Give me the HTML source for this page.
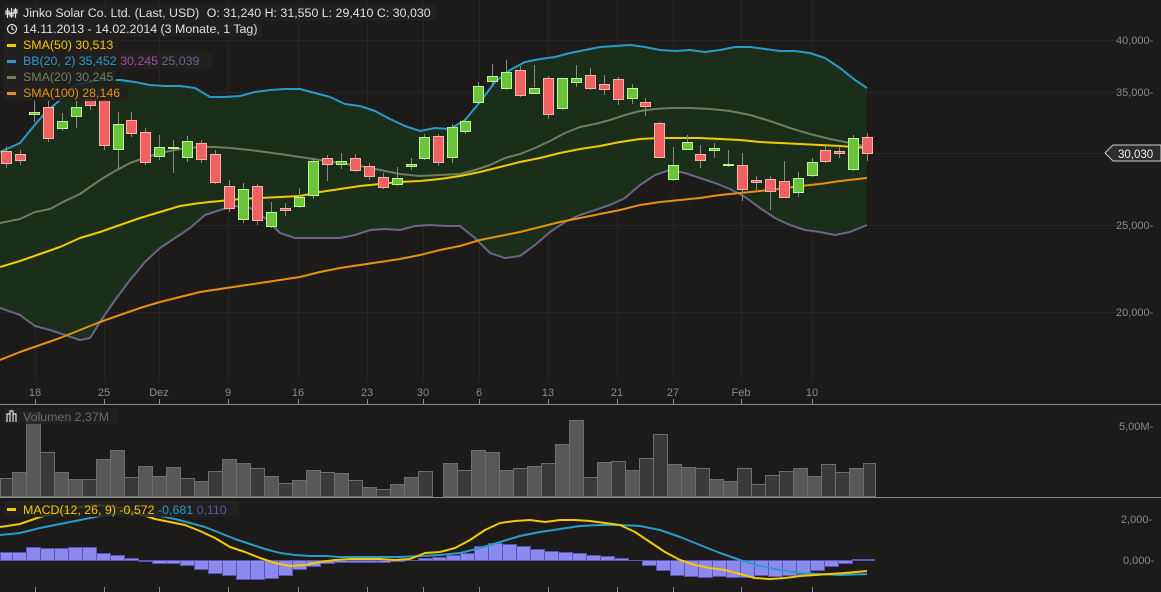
<!DOCTYPE html>
<html><head><meta charset="utf-8"><style>
html,body{margin:0;padding:0;background:#1c1b1a;width:1161px;height:592px;overflow:hidden}
svg{display:block;font-family:"Liberation Sans",sans-serif}
</style></head><body>
<svg width="1161" height="592" viewBox="0 0 1161 592">
<rect width="1161" height="592" fill="#1c1b1a"/>
<g stroke="#262624" stroke-width="1">
<line x1="0" y1="40.5" x2="1118" y2="40.5"/><line x1="0" y1="92.5" x2="1118" y2="92.5"/>
<line x1="0" y1="153.5" x2="1105" y2="153.5"/><line x1="0" y1="225.5" x2="1118" y2="225.5"/>
<line x1="0" y1="312.5" x2="1118" y2="312.5"/>
<line x1="35.5" y1="0" x2="35.5" y2="380"/><line x1="104.5" y1="0" x2="104.5" y2="380"/><line x1="159.5" y1="0" x2="159.5" y2="380"/><line x1="228.5" y1="0" x2="228.5" y2="380"/><line x1="298.5" y1="0" x2="298.5" y2="380"/><line x1="367.5" y1="0" x2="367.5" y2="380"/><line x1="423.5" y1="0" x2="423.5" y2="380"/><line x1="479.5" y1="0" x2="479.5" y2="380"/><line x1="548.5" y1="0" x2="548.5" y2="380"/><line x1="617.5" y1="0" x2="617.5" y2="380"/><line x1="673.5" y1="0" x2="673.5" y2="380"/><line x1="741.5" y1="0" x2="741.5" y2="380"/><line x1="812.5" y1="0" x2="812.5" y2="380"/>
</g>
<path fill="#1b2e1a" d="M0,152 L20,143 L33,127 L45,113 L60,100 L75,85 L90,82 L105,80 L120,80 L135,82 L150,85 L165,86 L180,86 L195,88 L210,97 L225,97 L240,96 L255,92 L270,90 L285,89 L300,89 L315,93 L330,97 L345,104 L360,106 L375,111 L390,119 L405,126 L420,131 L435,128 L450,129 L465,120 L480,102 L495,82 L510,70 L525,62 L540,59 L555,57 L570,53 L585,50 L600,47 L615,46 L630,45 L645,47 L660,50 L675,51 L690,50 L705,52 L720,50 L735,47 L750,47 L765,49 L780,51 L795,51 L810,53 L825,58 L840,68 L855,80 L867,88 L867,225 L850,232 L835,235 L820,232 L805,230 L790,225 L775,218 L760,208 L745,197 L730,189 L715,183 L700,178 L685,173 L670,170 L655,175 L640,185 L625,198 L610,205 L595,210 L580,215 L565,222 L550,232 L535,245 L520,256 L505,258 L490,253 L475,238 L460,226 L445,226 L430,225 L415,226 L400,230 L385,229 L370,230 L355,235 L340,238 L325,238 L310,238 L295,238 L280,233 L265,218 L250,208 L235,206 L220,210 L205,215 L190,228 L175,238 L160,248 L145,262 L130,280 L115,300 L100,322 L90,338 L80,340 L65,335 L50,330 L35,326 L20,315 L0,308 Z"/>
<g fill="none" stroke-width="2" stroke-linejoin="round">
<polyline stroke="#2a9ac8" points="0,152 20,143 33,127 45,113 60,100 75,85 90,82 105,80 120,80 135,82 150,85 165,86 180,86 195,88 210,97 225,97 240,96 255,92 270,90 285,89 300,89 315,93 330,97 345,104 360,106 375,111 390,119 405,126 420,131 435,128 450,129 465,120 480,102 495,82 510,70 525,62 540,59 555,57 570,53 585,50 600,47 615,46 630,45 645,47 660,50 675,51 690,50 705,52 720,50 735,47 750,47 765,49 780,51 795,51 810,53 825,58 840,68 855,80 867,88"/>
<polyline stroke="#6a6487" points="0,308 20,315 35,326 50,330 65,335 80,340 90,338 100,322 115,300 130,280 145,262 160,248 175,238 190,228 205,215 220,210 235,206 250,208 265,218 280,233 295,238 310,238 325,238 340,238 355,235 370,230 385,229 400,230 415,226 430,225 445,226 460,226 475,238 490,253 505,258 520,256 535,245 550,232 565,222 580,215 595,210 610,205 625,198 640,185 655,175 670,170 685,173 700,178 715,183 730,189 745,197 760,208 775,218 790,225 805,230 820,232 835,235 850,232 867,225"/>
<polyline stroke="#6f7f5e" points="0,223 20,219 35,212 50,209 65,201 80,194 100,180 115,171 130,163 150,156 165,152 180,149 200,147 215,147 230,148 250,150 265,152 280,154 300,157 320,160 340,163 360,166 380,170 400,174 420,176 440,175 460,174 475,170 490,165 505,158 520,154 535,148 550,141 565,133 580,127 595,124 610,120 625,115 640,111 655,109 670,108 690,108 710,109 730,111 750,115 770,121 790,128 810,134 830,139 850,143 867,147"/>
<polyline stroke="#e8900f" points="0,360 20,352 40,345 60,338 80,330 100,322 120,315 140,308 160,302 180,297 200,292 220,289 240,286 260,283 280,280 300,277 320,272 340,268 360,265 380,262 400,259 420,255 440,250 460,246 480,240 500,236 520,232 540,227 560,222 580,218 600,214 620,210 640,205 660,202 680,200 700,198 720,195 740,193 760,191 780,189 800,186 820,184 840,181 867,178"/>
<polyline stroke="#f5c800" points="0,267 20,261 40,254 60,247 80,238 100,232 120,225 140,218 160,212 180,206 200,203 220,201 240,199 260,198 280,197 300,196 320,192 340,189 360,186 380,184 400,182 420,181 440,179 460,176 480,172 500,167 520,162 540,158 560,153 580,149 600,146 620,142 640,139 660,138 680,138 700,138 720,139 740,140 760,142 780,143 800,144 820,145 840,146 867,148"/>
</g>
<g stroke="#8a8a86" stroke-width="1">
<line x1="6.5" y1="146" x2="6.5" y2="168"/><line x1="20.5" y1="150" x2="20.5" y2="165"/><line x1="34.5" y1="100" x2="34.5" y2="122"/><line x1="48.5" y1="100" x2="48.5" y2="142"/><line x1="62.5" y1="113" x2="62.5" y2="131"/><line x1="76.5" y1="100" x2="76.5" y2="128"/><line x1="90.5" y1="92" x2="90.5" y2="110"/><line x1="104.5" y1="92" x2="104.5" y2="150"/><line x1="118.5" y1="112" x2="118.5" y2="170"/><line x1="131.5" y1="112" x2="131.5" y2="137"/><line x1="145.5" y1="128" x2="145.5" y2="165"/><line x1="159.5" y1="135" x2="159.5" y2="160"/><line x1="173.5" y1="140" x2="173.5" y2="173"/><line x1="187.5" y1="136" x2="187.5" y2="162"/><line x1="201.5" y1="140" x2="201.5" y2="163"/><line x1="215.5" y1="150" x2="215.5" y2="184"/><line x1="229.5" y1="180" x2="229.5" y2="212"/><line x1="243.5" y1="183" x2="243.5" y2="223"/><line x1="257.5" y1="184" x2="257.5" y2="225"/><line x1="271.5" y1="202" x2="271.5" y2="228"/><line x1="285.5" y1="203" x2="285.5" y2="216"/><line x1="299.5" y1="188" x2="299.5" y2="208"/><line x1="313.5" y1="158" x2="313.5" y2="199"/><line x1="327.5" y1="155" x2="327.5" y2="181"/><line x1="341.5" y1="153" x2="341.5" y2="169"/><line x1="355.5" y1="154" x2="355.5" y2="172"/><line x1="369.5" y1="163" x2="369.5" y2="180"/><line x1="383.5" y1="173" x2="383.5" y2="189"/><line x1="397.5" y1="167" x2="397.5" y2="186"/><line x1="411.5" y1="158" x2="411.5" y2="170"/><line x1="424.5" y1="134" x2="424.5" y2="160"/><line x1="438.5" y1="134" x2="438.5" y2="166"/><line x1="452.5" y1="124" x2="452.5" y2="163"/><line x1="465.5" y1="118" x2="465.5" y2="134"/><line x1="478.5" y1="82" x2="478.5" y2="104"/><line x1="492.5" y1="64" x2="492.5" y2="86"/><line x1="506.5" y1="60" x2="506.5" y2="90"/><line x1="520.5" y1="66" x2="520.5" y2="97"/><line x1="534.5" y1="65" x2="534.5" y2="87"/><line x1="548.5" y1="76" x2="548.5" y2="119"/><line x1="562.5" y1="78" x2="562.5" y2="110"/><line x1="576.5" y1="65" x2="576.5" y2="87"/><line x1="590.5" y1="68" x2="590.5" y2="90"/><line x1="604.5" y1="75" x2="604.5" y2="95"/><line x1="618.5" y1="77" x2="618.5" y2="105"/><line x1="632.5" y1="84" x2="632.5" y2="104"/><line x1="645.5" y1="98" x2="645.5" y2="116"/><line x1="659.5" y1="122" x2="659.5" y2="158"/><line x1="673.5" y1="147" x2="673.5" y2="181"/><line x1="687.5" y1="135" x2="687.5" y2="150"/><line x1="700.5" y1="145" x2="700.5" y2="168"/><line x1="714.5" y1="143" x2="714.5" y2="158"/><line x1="728.5" y1="150" x2="728.5" y2="167"/><line x1="742.5" y1="153" x2="742.5" y2="201"/><line x1="756.5" y1="176" x2="756.5" y2="190"/><line x1="770.5" y1="176" x2="770.5" y2="210"/><line x1="784.5" y1="161" x2="784.5" y2="198"/><line x1="798.5" y1="172" x2="798.5" y2="197"/><line x1="812.5" y1="158" x2="812.5" y2="177"/><line x1="825.5" y1="146" x2="825.5" y2="163"/><line x1="839.5" y1="146" x2="839.5" y2="158"/><line x1="853.5" y1="135" x2="853.5" y2="171"/><line x1="867.5" y1="133" x2="867.5" y2="161"/>
</g>
<g fill="#f06262" stroke="#ffb0a8" stroke-width="1">
<rect x="1.5" y="151.5" width="10" height="12"/><rect x="15.5" y="154.5" width="10" height="6"/><rect x="43.5" y="107.5" width="10" height="31"/><rect x="85.5" y="99.5" width="10" height="6"/><rect x="99.5" y="100.5" width="10" height="45"/><rect x="126.5" y="120.5" width="10" height="13"/><rect x="140.5" y="132.5" width="10" height="30"/><rect x="196.5" y="143.5" width="10" height="16"/><rect x="210.5" y="154.5" width="10" height="28"/><rect x="224.5" y="186.5" width="10" height="22"/><rect x="252.5" y="186.5" width="10" height="34"/><rect x="280.5" y="208.5" width="10" height="2"/><rect x="322.5" y="158.5" width="10" height="6"/><rect x="350.5" y="158.5" width="10" height="12"/><rect x="364.5" y="166.5" width="10" height="10"/><rect x="378.5" y="177.5" width="10" height="10"/><rect x="433.5" y="136.5" width="10" height="26"/><rect x="515.5" y="70.5" width="10" height="25"/><rect x="543.5" y="78.5" width="10" height="36"/><rect x="585.5" y="75.5" width="10" height="13"/><rect x="599.5" y="84.5" width="10" height="5"/><rect x="613.5" y="79.5" width="10" height="20"/><rect x="640.5" y="102.5" width="10" height="4"/><rect x="654.5" y="123.5" width="10" height="34"/><rect x="695.5" y="154.5" width="10" height="6"/><rect x="737.5" y="165.5" width="10" height="24"/><rect x="751.5" y="180.5" width="10" height="2"/><rect x="765.5" y="179.5" width="10" height="12"/><rect x="779.5" y="181.5" width="10" height="16"/><rect x="820.5" y="150.5" width="10" height="11"/><rect x="834.5" y="151.5" width="10" height="2"/><rect x="862.5" y="137.5" width="10" height="16"/>
</g>
<g fill="#6cc43a" stroke="#b8f890" stroke-width="1">
<rect x="29.5" y="112.5" width="10" height="2"/><rect x="57.5" y="121.5" width="10" height="7"/><rect x="71.5" y="107.5" width="10" height="9"/><rect x="113.5" y="124.5" width="10" height="25"/><rect x="154.5" y="147.5" width="10" height="9"/><rect x="168.5" y="147.5" width="10" height="1"/><rect x="182.5" y="141.5" width="10" height="16"/><rect x="238.5" y="189.5" width="10" height="30"/><rect x="266.5" y="212.5" width="10" height="14"/><rect x="294.5" y="197.5" width="10" height="9"/><rect x="308.5" y="161.5" width="10" height="34"/><rect x="336.5" y="161.5" width="10" height="3"/><rect x="392.5" y="178.5" width="10" height="6"/><rect x="406.5" y="164.5" width="10" height="2"/><rect x="419.5" y="137.5" width="10" height="21"/><rect x="447.5" y="127.5" width="10" height="30"/><rect x="460.5" y="121.5" width="10" height="10"/><rect x="473.5" y="86.5" width="10" height="16"/><rect x="487.5" y="76.5" width="10" height="5"/><rect x="501.5" y="72.5" width="10" height="16"/><rect x="529.5" y="88.5" width="10" height="5"/><rect x="557.5" y="78.5" width="10" height="30"/><rect x="571.5" y="78.5" width="10" height="4"/><rect x="627.5" y="88.5" width="10" height="10"/><rect x="668.5" y="165.5" width="10" height="14"/><rect x="682.5" y="142.5" width="10" height="7"/><rect x="709.5" y="148.5" width="10" height="2"/><rect x="723.5" y="164.5" width="10" height="1"/><rect x="793.5" y="178.5" width="10" height="14"/><rect x="807.5" y="162.5" width="10" height="13"/><rect x="848.5" y="138.5" width="10" height="31"/>
</g>
<path d="M1105,153 L1113,145 L1161,145 L1161,161 L1113,161 Z" fill="#2c2c2c" stroke="#cfcfcf" stroke-width="1"/>
<text x="1118" y="158" fill="#f0f0f0" font-size="11.5">30,030</text>
<g fill="#8a8a8a" font-size="11">
<text x="1116" y="44">40,000-</text><text x="1116" y="96">35,000-</text><text x="1116" y="229">25,000-</text><text x="1116" y="316">20,000-</text>
<text x="1119" y="430">5,00M-</text><text x="1121" y="523">2,000-</text><text x="1123" y="564">0,000-</text>
</g>
<g fill="#8a8a8a" font-size="11" text-anchor="middle">
<text x="35" y="396">18</text><text x="104" y="396">25</text><text x="159" y="396">Dez</text><text x="228" y="396">9</text><text x="298" y="396">16</text><text x="367" y="396">23</text><text x="423" y="396">30</text><text x="479" y="396">6</text><text x="548" y="396">13</text><text x="617" y="396">21</text><text x="673" y="396">27</text><text x="741" y="396">Feb</text><text x="812" y="396">10</text>
</g>
<g stroke="#8a8a8a"><line x1="0" y1="404.5" x2="1161" y2="404.5"/><line x1="0" y1="497.5" x2="1161" y2="497.5"/></g>
<g stroke="#8a8a8a"><line x1="35.5" y1="399" x2="35.5" y2="404"/><line x1="104.5" y1="399" x2="104.5" y2="404"/><line x1="159.5" y1="399" x2="159.5" y2="404"/><line x1="228.5" y1="399" x2="228.5" y2="404"/><line x1="298.5" y1="399" x2="298.5" y2="404"/><line x1="367.5" y1="399" x2="367.5" y2="404"/><line x1="423.5" y1="399" x2="423.5" y2="404"/><line x1="479.5" y1="399" x2="479.5" y2="404"/><line x1="548.5" y1="399" x2="548.5" y2="404"/><line x1="617.5" y1="399" x2="617.5" y2="404"/><line x1="673.5" y1="399" x2="673.5" y2="404"/><line x1="741.5" y1="399" x2="741.5" y2="404"/><line x1="812.5" y1="399" x2="812.5" y2="404"/></g>
<g stroke="#6e6e6e" stroke-width="1">
<g fill="#3a3a3a">
<rect x="0.5" y="478.5" width="12" height="18"/><rect x="40.5" y="452.5" width="14" height="44"/><rect x="82.5" y="479.5" width="14" height="17"/><rect x="124.5" y="477.5" width="14" height="19"/><rect x="180.5" y="478.5" width="14" height="18"/><rect x="208.5" y="471.5" width="14" height="25"/><rect x="250.5" y="468.5" width="14" height="28"/><rect x="278.5" y="483.5" width="14" height="13"/><rect x="320.5" y="472.5" width="14" height="24"/><rect x="348.5" y="480.5" width="14" height="16"/><rect x="376.5" y="489.5" width="14" height="7"/><rect x="418.5" y="471.5" width="14" height="25"/><rect x="457.5" y="470.5" width="14" height="26"/><rect x="513.5" y="468.5" width="14" height="28"/><rect x="541.5" y="463.5" width="14" height="33"/><rect x="583.5" y="477.5" width="14" height="19"/><rect x="611.5" y="461.5" width="14" height="35"/><rect x="639.5" y="458.5" width="14" height="38"/><rect x="653.5" y="434.5" width="14" height="62"/><rect x="695.5" y="468.5" width="14" height="28"/><rect x="737.5" y="468.5" width="14" height="28"/><rect x="751.5" y="484.5" width="14" height="12"/><rect x="765.5" y="475.5" width="14" height="21"/><rect x="779.5" y="471.5" width="14" height="25"/><rect x="821.5" y="464.5" width="14" height="32"/><rect x="835.5" y="472.5" width="14" height="24"/><rect x="863.5" y="463.5" width="12" height="33"/>
</g>
<g fill="#585858">
<rect x="12.5" y="472.5" width="14" height="24"/><rect x="26.5" y="412.5" width="14" height="84"/><rect x="54.5" y="472.5" width="14" height="24"/><rect x="68.5" y="479.5" width="14" height="17"/><rect x="96.5" y="459.5" width="14" height="37"/><rect x="110.5" y="450.5" width="14" height="46"/><rect x="138.5" y="466.5" width="14" height="30"/><rect x="152.5" y="476.5" width="14" height="20"/><rect x="166.5" y="467.5" width="14" height="29"/><rect x="194.5" y="481.5" width="14" height="15"/><rect x="222.5" y="459.5" width="14" height="37"/><rect x="236.5" y="463.5" width="14" height="33"/><rect x="264.5" y="476.5" width="14" height="20"/><rect x="292.5" y="480.5" width="14" height="16"/><rect x="306.5" y="470.5" width="14" height="26"/><rect x="334.5" y="473.5" width="14" height="23"/><rect x="362.5" y="487.5" width="14" height="9"/><rect x="390.5" y="484.5" width="14" height="12"/><rect x="404.5" y="477.5" width="14" height="19"/><rect x="443.5" y="463.5" width="14" height="33"/><rect x="471.5" y="450.5" width="14" height="46"/><rect x="485.5" y="452.5" width="14" height="44"/><rect x="499.5" y="470.5" width="14" height="26"/><rect x="527.5" y="466.5" width="14" height="30"/><rect x="555.5" y="444.5" width="14" height="52"/><rect x="569.5" y="420.5" width="14" height="76"/><rect x="597.5" y="462.5" width="14" height="34"/><rect x="625.5" y="470.5" width="14" height="26"/><rect x="667.5" y="464.5" width="14" height="32"/><rect x="681.5" y="467.5" width="14" height="29"/><rect x="709.5" y="479.5" width="14" height="17"/><rect x="723.5" y="481.5" width="14" height="15"/><rect x="793.5" y="468.5" width="14" height="28"/><rect x="807.5" y="476.5" width="14" height="20"/><rect x="849.5" y="468.5" width="14" height="28"/>
</g>
</g>
<g fill="#8b88ee" stroke="#5a55b5" stroke-width="1">
<rect x="0.5" y="552.5" width="12" height="8"/><rect x="12.5" y="552.5" width="14" height="8"/><rect x="26.5" y="547.5" width="14" height="13"/><rect x="40.5" y="548.5" width="14" height="12"/><rect x="54.5" y="548.5" width="14" height="12"/><rect x="68.5" y="547.5" width="14" height="13"/><rect x="82.5" y="547.5" width="14" height="13"/><rect x="96.5" y="553.5" width="14" height="7"/><rect x="110.5" y="555.5" width="14" height="5"/><rect x="124.5" y="558.5" width="14" height="2"/>
<rect x="138.5" y="560.5" width="14" height="1"/><rect x="152.5" y="560.5" width="14" height="3"/><rect x="166.5" y="560.5" width="14" height="3"/><rect x="180.5" y="560.5" width="14" height="5"/><rect x="194.5" y="560.5" width="14" height="9"/><rect x="208.5" y="560.5" width="14" height="13"/><rect x="222.5" y="560.5" width="14" height="15"/><rect x="236.5" y="560.5" width="14" height="19"/><rect x="250.5" y="560.5" width="14" height="19"/><rect x="264.5" y="560.5" width="14" height="18"/><rect x="278.5" y="560.5" width="14" height="15"/><rect x="292.5" y="560.5" width="14" height="9"/><rect x="306.5" y="560.5" width="14" height="6"/><rect x="320.5" y="560.5" width="14" height="3"/><rect x="334.5" y="560.5" width="14" height="2"/><rect x="348.5" y="560.5" width="14" height="2"/><rect x="362.5" y="560.5" width="14" height="2"/><rect x="376.5" y="560.5" width="14" height="2"/><rect x="390.5" y="560.5" width="14" height="1"/>
<rect x="418.5" y="558.5" width="14" height="2"/><rect x="432.5" y="557.5" width="14" height="3"/><rect x="446.5" y="555.5" width="14" height="5"/><rect x="460.5" y="553.5" width="14" height="7"/><rect x="474.5" y="546.5" width="14" height="14"/><rect x="488.5" y="543.5" width="14" height="17"/><rect x="502.5" y="544.5" width="14" height="16"/><rect x="516.5" y="546.5" width="14" height="14"/><rect x="530.5" y="549.5" width="14" height="11"/><rect x="544.5" y="551.5" width="14" height="9"/><rect x="558.5" y="552.5" width="14" height="8"/><rect x="572.5" y="553.5" width="14" height="7"/><rect x="586.5" y="555.5" width="14" height="5"/><rect x="600.5" y="556.5" width="14" height="4"/><rect x="614.5" y="558.5" width="14" height="2"/>
<rect x="642.5" y="560.5" width="14" height="5"/><rect x="656.5" y="560.5" width="14" height="10"/><rect x="670.5" y="560.5" width="14" height="15"/><rect x="684.5" y="560.5" width="14" height="16"/><rect x="698.5" y="560.5" width="14" height="17"/><rect x="712.5" y="560.5" width="14" height="16"/><rect x="726.5" y="560.5" width="14" height="17"/><rect x="740.5" y="560.5" width="14" height="17"/><rect x="754.5" y="560.5" width="14" height="15"/><rect x="768.5" y="560.5" width="14" height="16"/><rect x="782.5" y="560.5" width="14" height="15"/><rect x="796.5" y="560.5" width="14" height="14"/><rect x="810.5" y="560.5" width="14" height="10"/><rect x="824.5" y="560.5" width="14" height="6"/><rect x="838.5" y="560.5" width="14" height="3"/><rect x="852.5" y="559.5" width="22" height="1"/>
</g>
<line x1="0" y1="560.5" x2="875" y2="560.5" stroke="#5a55b5"/>
<g fill="none" stroke-width="2" stroke-linejoin="round">
<polyline stroke="#2a9ac8" points="0,535 20,533 40,528 60,524 80,520 100,516 115,514 130,513 145,514 160,516 175,519 190,523 205,527 220,533 235,539 250,544 265,549 280,553 295,555 310,556 325,556 340,557 360,557 380,557 400,557 420,556 440,555 460,553 480,548 500,542 520,536 540,532 560,529 580,526 600,525 620,525 640,526 660,530 680,537 700,545 720,553 740,560 760,566 780,570 800,573 820,574 840,575 867,574"/>
<polyline stroke="#f5c800" points="0,527 20,524 40,517 60,512 80,507 95,505 110,506 125,509 140,514 155,519 170,522 185,525 200,531 215,538 230,547 245,552 260,558 275,563 290,566 305,565 320,562 335,560 350,559 365,559 380,559 395,560 410,559 425,553 440,552 455,548 470,540 485,530 500,523 515,521 530,520 545,522 560,520 575,520 590,521 605,523 620,525 635,532 650,542 665,552 680,560 695,565 710,568 725,570 740,574 755,578 770,579 785,578 800,576 815,575 830,574 845,573 867,571"/>
</g>
<g stroke="#8a8a8a"><line x1="35.5" y1="587" x2="35.5" y2="592"/><line x1="104.5" y1="587" x2="104.5" y2="592"/><line x1="159.5" y1="587" x2="159.5" y2="592"/><line x1="228.5" y1="587" x2="228.5" y2="592"/><line x1="298.5" y1="587" x2="298.5" y2="592"/><line x1="367.5" y1="587" x2="367.5" y2="592"/><line x1="423.5" y1="587" x2="423.5" y2="592"/><line x1="479.5" y1="587" x2="479.5" y2="592"/><line x1="548.5" y1="587" x2="548.5" y2="592"/><line x1="617.5" y1="587" x2="617.5" y2="592"/><line x1="673.5" y1="587" x2="673.5" y2="592"/><line x1="741.5" y1="587" x2="741.5" y2="592"/><line x1="812.5" y1="587" x2="812.5" y2="592"/></g>
<g fill="#222120" opacity="0.85">
<rect x="4" y="4" width="432" height="17"/><rect x="4" y="21" width="258" height="16"/><rect x="4" y="37" width="115" height="16"/><rect x="4" y="53" width="208" height="16"/><rect x="4" y="69" width="112" height="16"/><rect x="4" y="85" width="124" height="16"/>
<rect x="4" y="408" width="113" height="16"/><rect x="4" y="501" width="235" height="16"/>
</g>
<g font-size="12.4">
<g stroke="#e0e0e0" stroke-width="1.2" fill="none"><line x1="7.5" y1="8" x2="7.5" y2="18"/><line x1="11.5" y1="8" x2="11.5" y2="18"/><line x1="15.5" y1="8" x2="15.5" y2="18"/><rect x="6" y="11" width="3" height="3"/><rect x="10" y="13" width="3" height="3"/><rect x="14" y="10" width="3" height="3"/><circle cx="12" cy="29" r="4.5"/><polyline points="12,26 12,29 14,30"/></g>
<text x="23" y="17" fill="#e0e0e0">Jinko Solar Co. Ltd. (Last, USD) <tspan dx="4">O: 31,240  H: 31,550  L: 29,410  C: 30,030</tspan></text>
<text x="23" y="33" fill="#e0e0e0">14.11.2013 - 14.02.2014 (3 Monate, 1 Tag)</text>
<rect x="7" y="44" width="9" height="3" fill="#f5c800"/><text x="23" y="49" fill="#f5c800">SMA(50)  30,513</text>
<rect x="7" y="60" width="9" height="3" fill="#2a9ac8"/><text x="23" y="65" fill="#2a9ac8">BB(20, 2)  35,452 <tspan fill="#a04aa0">30,245</tspan> <tspan fill="#6a6487">25,039</tspan></text>
<rect x="7" y="76" width="9" height="3" fill="#6f7f5e"/><text x="23" y="81" fill="#6f7f5e">SMA(20)  30,245</text>
<rect x="7" y="92" width="9" height="3" fill="#e8900f"/><text x="23" y="97" fill="#e8900f">SMA(100)  28,146</text>
<g stroke="#e0e0e0" fill="none" stroke-width="1.2"><polyline points="7,422 7,414 10,414 10,411 13,411 13,414 16,414 16,422"/><line x1="10" y1="414" x2="10" y2="422"/><line x1="13" y1="414" x2="13" y2="422"/></g>
<text x="23" y="421" fill="#6a6a6a">Volumen  2,37M</text>
<rect x="7" y="508" width="9" height="3" fill="#f5c800"/><text x="23" y="514" fill="#f5c800">MACD(12, 26, 9)  -0,572 <tspan fill="#2a9ac8">-0,681</tspan> <tspan fill="#5a55b5">0,110</tspan></text>
</g>
</svg>
</body></html>
